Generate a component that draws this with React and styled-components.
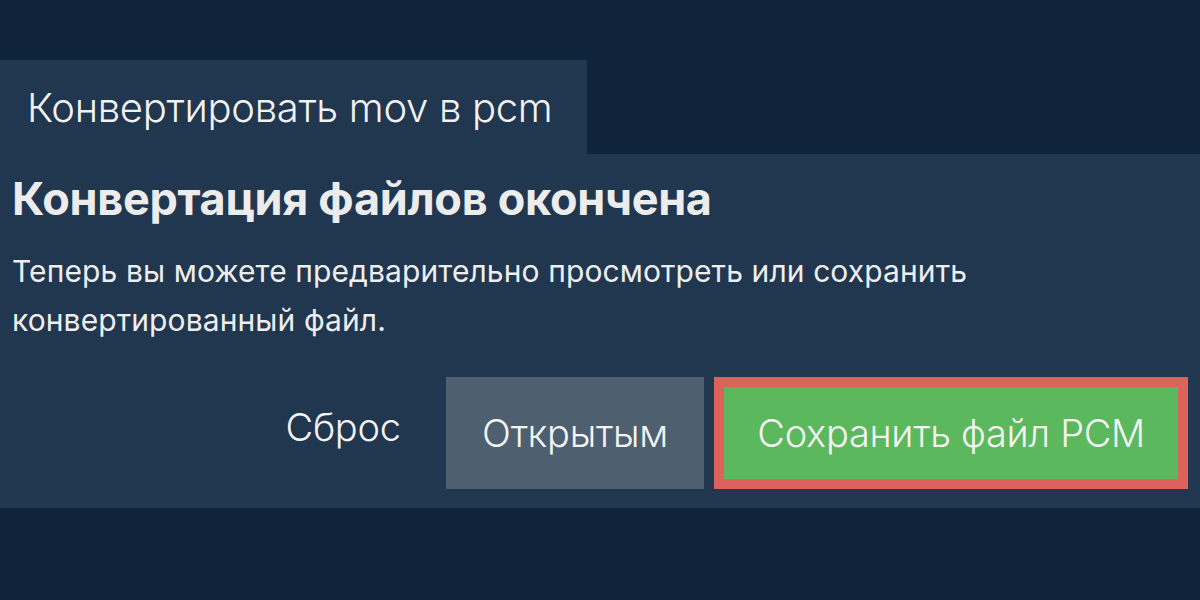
import React from 'react';
import styled, { createGlobalStyle } from 'styled-components';

const GlobalStyle = createGlobalStyle`
  html, body {
    margin: 0;
    padding: 0;
    background: #0f233a;
  }
  body {
    font-family: Inter, "Noto Sans", "DejaVu Sans", sans-serif;
    color: #eeeeee;
  }
`;

const Page = styled.div`
  width: 1200px;
  height: 600px;
  padding-top: 60px;
  box-sizing: border-box;
  background: #0f233a;
`;

const Tab = styled.div`
  display: inline-flex;
  align-items: center;
  height: 94px;
  padding: 0 35px 0 27px;
  background: #21364f;
  font-size: 40px;
  font-weight: 300;
  color: #f2f2f2;
  letter-spacing: -0.3px;
`;

const Panel = styled.div`
  background: #21364f;
  padding: 18px 12px 19px 12px;
`;

const Title = styled.h1`
  margin: 0;
  font-size: 45px;
  line-height: 1.2;
  font-weight: 700;
  color: #ececec;
  letter-spacing: -0.3px;
`;

const Text = styled.p`
  margin: 21px 0 0;
  font-size: 30px;
  line-height: 49px;
  font-weight: 400;
  color: #eeeeee;
  max-width: 1050px;
  letter-spacing: 0.1px;
`;

const Actions = styled.div`
  display: flex;
  justify-content: flex-end;
  align-items: center;
  gap: 10px;
  margin-top: 32px;
`;

const Button = styled.button`
  height: 112px;
  box-sizing: border-box;
  padding: 0 ${(p) => p.$pad || 34}px;
  border: ${(p) => (p.$outline ? '10px solid #de625c' : 'none')};
  background: ${(p) => p.$bg || 'transparent'};
  color: #f4f4f4;
  font-family: inherit;
  font-size: 38px;
  font-weight: 300;
  letter-spacing: -0.3px;
  cursor: pointer;
`;

const ResetButton = styled(Button)`
  padding: 0 ${(p) => p.$pad}px 12px;
`;

export default function App() {
  return (
    <>
      <GlobalStyle />
      <Page>
        <Tab>Конвертировать mov в pcm</Tab>
        <Panel>
          <Title>Конвертация файлов окончена</Title>
          <Text>
            Теперь вы можете предварительно просмотреть или сохранить
            конвертированный файл.
          </Text>
          <Actions>
            <ResetButton $pad={35}>Сброс</ResetButton>
            <Button $bg="#4e5f70" $pad={36.5}>Открытым</Button>
            <Button $bg="#5cb85c" $pad={33} $outline>Сохранить файл PCM</Button>
          </Actions>
        </Panel>
      </Page>
    </>
  );
}
